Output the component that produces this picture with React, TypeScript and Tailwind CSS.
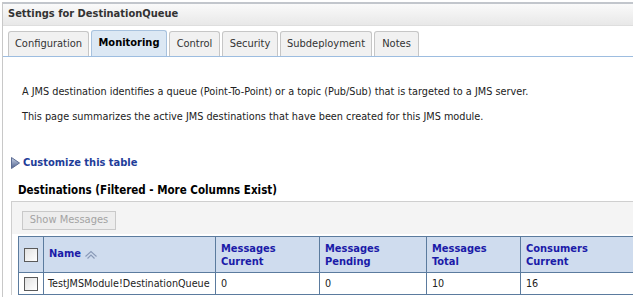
import React from "react"

const tabs = [
  { name: "Configuration", w: "w-[81px]" },
  { name: "Monitoring", w: "w-[76px]" },
  { name: "Control", w: "w-[51px]" },
  { name: "Security", w: "w-[56px]" },
  { name: "Subdeployment", w: "w-[92px]" },
  { name: "Notes", w: "w-[45px]" },
]

const cols = [
  { label: ["Messages", "Current"] },
  { label: ["Messages", "Pending"] },
  { label: ["Messages", "Total"] },
  { label: ["Consumers", "Current"] },
]

const values = ["0", "0", "10", "16"]

function Check() {
  return (
    <span className="block w-[14px] h-[14px] border border-[#5a5a5a] bg-gradient-to-br from-[#e2e2e2] to-white" />
  )
}

function SortIcon() {
  return (
    <svg width="14" height="10" viewBox="0 0 14 10" className="ml-[3px] mt-[1px]">
      <path d="M1.5 6.5 L7 1.5 L12.5 6.5" fill="none" stroke="#8a9ab8" strokeWidth="1.2" />
      <path d="M3.5 8.5 L7 5 L10.5 8.5" fill="none" stroke="#8a9ab8" strokeWidth="1.2" />
    </svg>
  )
}

function Arrow() {
  return (
    <svg width="9" height="12" viewBox="0 0 9 12" className="mr-[3px]">
      <defs>
        <linearGradient id="ag" x1="0" y1="0" x2="0" y2="1">
          <stop offset="0" stopColor="#c9d3e6" />
          <stop offset="1" stopColor="#4d5f8c" />
        </linearGradient>
      </defs>
      <path d="M0.5 0.5 L8.5 6 L0.5 11.5 Z" fill="url(#ag)" stroke="#5d6d94" strokeWidth="1" />
    </svg>
  )
}

export default function App() {
  return (
    <div className="w-[633px] h-[297px] overflow-hidden bg-white text-[11px] text-[#222] font-['DejaVu_Sans_Condensed','DejaVu_Sans',sans-serif]">
      <div className="ml-[2px] h-full border-l border-[#c8c8c8]">
        <div className="mt-[2px] h-[24px] border-t-2 border-b border-t-[#c2c6cc] border-b-[#dedede] bg-gradient-to-b from-[#fafafa] to-[#e8e8e8] pl-[5px] flex items-center text-[11px] font-bold text-[#333]">
          Settings for DestinationQueue
        </div>

        <div className="mt-[4px] flex items-end gap-[2px] pl-[5px] border-b border-[#9dbde0]">
          {tabs.map(t =>
            t.name === "Monitoring" ? (
              <div
                key={t.name}
                className={`${t.w} h-[26px] flex items-center justify-center rounded-t-[3px] border border-b-0 border-[#a8c2de] bg-[#dce8f4] text-[11px] font-bold text-black`}
              >
                {t.name}
              </div>
            ) : (
              <div
                key={t.name}
                className={`${t.w} h-[25px] flex items-center justify-center rounded-t-[3px] border border-b-0 border-[#c6c6c6] bg-[#f1f1f1] text-[11px] text-[#333]`}
              >
                {t.name}
              </div>
            )
          )}
        </div>

        <div className="pl-[19px] pt-[28px] leading-[14px] text-[10.8px]">
          <p>A JMS destination identifies a queue (Point-To-Point) or a topic (Pub/Sub) that is targeted to a JMS server.</p>
          <p className="mt-[11px]">This page summarizes the active JMS destinations that have been created for this JMS module.</p>
        </div>

        <div className="mt-[32px] h-[14px] pl-[8px] flex items-center text-[11px] leading-[14px] font-bold text-[#1f3d99]">
          <Arrow />
          Customize this table
        </div>

        <div className="mt-[13px] h-[14px] pl-[15px] text-[11.5px] leading-[14px] font-bold text-black">
          Destinations (Filtered - More Columns Exist)
        </div>

        <div className="mt-[4px] ml-[8px] border-l border-t border-[#cfcfcf]">
          <div className="bg-[#f4f4f4] h-[32px] pl-[10px] pt-[9px]">
            <div className="w-[94px] h-[19px] border border-[#c9c9c9] bg-[#ededed] text-[11px] text-[#a3a3a3] flex items-center justify-center">
              Show Messages
            </div>
          </div>
          <div className="pl-[6px] pt-[2px]">
            <table className="w-[632px] border-collapse border border-[#5b7b9e] table-fixed">
              <colgroup>
                <col className="w-[25px]" />
                <col className="w-[172px]" />
                <col className="w-[104px]" />
                <col className="w-[107px]" />
                <col className="w-[94px]" />
                <col className="w-[130px]" />
              </colgroup>
              <thead>
                <tr className="bg-[#cfdcee] h-[36px]">
                  <th className="border border-[#5b7b9e] px-[5px]">
                    <Check />
                  </th>
                  <th className="border border-[#5b7b9e] text-left px-[5px]">
                    <span className="flex items-center text-[11px] font-bold text-[#1b1ba8]">
                      Name
                      <SortIcon />
                    </span>
                  </th>
                  {cols.map(c => (
                    <th
                      key={c.label.join(" ")}
                      className="border border-[#5b7b9e] text-left px-[5px] align-top pt-[5px] text-[11px] font-bold text-[#1b1ba8] leading-[13px]"
                    >
                      {c.label[0]}
                      <br />
                      {c.label[1]}
                    </th>
                  ))}
                </tr>
              </thead>
              <tbody>
                <tr className="h-[22px]">
                  <td className="border border-[#5b7b9e] px-[5px] py-0">
                    <Check />
                  </td>
                  <td className="border border-[#5b7b9e] px-[4px] py-0 text-[10.7px] leading-[14px] whitespace-nowrap">
                    TestJMSModule!DestinationQueue
                  </td>
                  {values.map((v, i) => (
                    <td key={i} className="border border-[#5b7b9e] px-[5px] py-0 text-[10.7px] leading-[14px]">
                      {v}
                    </td>
                  ))}
                </tr>
              </tbody>
            </table>
          </div>
        </div>
      </div>
    </div>
  )
}
